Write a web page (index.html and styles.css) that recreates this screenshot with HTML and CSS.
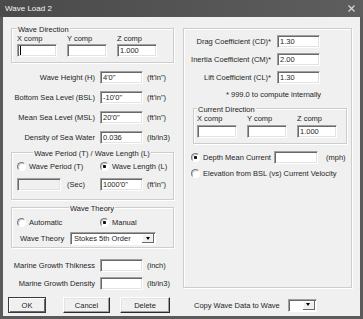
FILE: index.html
```html
<!DOCTYPE html>
<html lang="en">
<head>
    <meta charset="UTF-8">
    <title>Wave Load 2</title>
    <link rel="stylesheet" href="styles.css">
</head>
<body>

    <div class="window">
        <div class="title-bar">
            <span class="title">Wave Load 2</span>
            <svg class="close" width="7" height="7" viewBox="0 0 7 7">
                <path d="M0.5 0.5 L6.5 6.5 M6.5 0.5 L0.5 6.5" stroke="#dcdcdc" stroke-width="1.1" fill="none"/>
            </svg>
        </div>

        <div class="client">
            <div class="columns">

                <!-- Left column -->
                <div class="col-left">
                    <div class="group">
                        <span class="group-title">Wave Direction</span>
                        <div class="comp-grid">
                            <span>X comp</span><span>Y comp</span><span>Z comp</span>
                            <div class="edit-wrap"><input class="edit" type="text" value=""><span class="caret"></span></div>
                            <input class="edit" type="text" value="">
                            <input class="edit" type="text" value="1.000">
                        </div>
                    </div>

                    <div class="field-rows">
                        <label class="field-label">Wave Height (H)</label>
                        <input class="edit" type="text" value="4'0&quot;">
                        <span class="unit">(ft'in")</span>

                        <label class="field-label">Bottom Sea Level (BSL)</label>
                        <input class="edit" type="text" value="-10'0&quot;">
                        <span class="unit">(ft'in")</span>

                        <label class="field-label">Mean Sea Level (MSL)</label>
                        <input class="edit" type="text" value="20'0&quot;">
                        <span class="unit">(ft'in")</span>

                        <label class="field-label">Density of Sea Water</label>
                        <input class="edit" type="text" value="0.036">
                        <span class="unit">(lb/in3)</span>
                    </div>

                    <div class="group group-period">
                        <span class="group-title centered">Wave Period (T) / Wave Length (L)</span>
                        <div class="pair-grid">
                            <label class="radio"><input type="radio" name="period"> Wave Period (T)</label>
                            <label class="radio"><input type="radio" name="period" checked> Wave Length (L)</label>
                            <div class="cell">
                                <input class="edit edit-wide" type="text" value="" disabled>
                                <span class="unit-sec">(Sec)</span>
                            </div>
                            <div class="cell">
                                <input class="edit" type="text" value="1000'0&quot;">
                                <span class="unit">(ft'in")</span>
                            </div>
                        </div>
                    </div>

                    <div class="group group-theory">
                        <span class="group-title centered">Wave Theory</span>
                        <div class="pair-grid theory-radios">
                            <label class="radio"><input type="radio" name="theory"> Automatic</label>
                            <label class="radio"><input type="radio" name="theory" checked> Manual</label>
                        </div>
                        <div class="theory-row">
                            <span class="theory-label">Wave Theory</span>
                            <div class="combo combo-theory">
                                <span class="combo-text">Stokes 5th Order</span>
                                <span class="combo-btn"><i class="arrow"></i></span>
                            </div>
                        </div>
                    </div>

                    <div class="field-rows marine-rows">
                        <label class="field-label">Marine Growth Thikness</label>
                        <input class="edit" type="text" value="">
                        <span class="unit">(inch)</span>

                        <label class="field-label">Marine Growth Density</label>
                        <input class="edit" type="text" value="">
                        <span class="unit">(lb/in3)</span>
                    </div>
                </div>

                <!-- Right column -->
                <div class="panel">
                    <div class="coef-row">
                        <label>Drag Coefficient (CD)*</label>
                        <input class="edit" type="text" value="1.30">
                    </div>
                    <div class="coef-row">
                        <label>Inertia Coefficient (CM)*</label>
                        <input class="edit" type="text" value="2.00">
                    </div>
                    <div class="coef-row">
                        <label>Lift Coefficient (CL)*</label>
                        <input class="edit" type="text" value="1.30">
                    </div>
                    <p class="note">* 999.0 to compute internally</p>

                    <div class="group group-current">
                        <span class="group-title">Current Direction</span>
                        <div class="comp-grid">
                            <span>X comp</span><span>Y comp</span><span>Z comp</span>
                            <input class="edit" type="text" value="">
                            <input class="edit" type="text" value="">
                            <input class="edit" type="text" value="1.000">
                        </div>
                    </div>

                    <div class="current-row">
                        <label class="radio radio-fixed"><input type="radio" name="current" checked> Depth Mean Current</label>
                        <input class="edit edit-wide" type="text" value="">
                        <span class="unit-mph">(mph)</span>
                    </div>
                    <div class="current-row second">
                        <label class="radio"><input type="radio" name="current"> Elevation from BSL (vs) Current Velocity</label>
                    </div>
                </div>
            </div>

            <div class="bottom-bar">
                <button class="btn btn-default btn-ok">OK</button>
                <button class="btn btn-cancel">Cancel</button>
                <button class="btn btn-delete">Delete</button>
                <span class="copy-label">Copy Wave Data to Wave</span>
                <div class="combo combo-copy">
                    <span class="combo-text"></span>
                    <span class="combo-btn"><i class="arrow"></i></span>
                </div>
            </div>
        </div>
    </div>

</body>
</html>
```

FILE: styles.css
```css
/* --- Base --- */
:root {
    --face: #f0f0f0;
    --shadow: #a0a0a0;
    --dark: #696969;
    --frame: #5b5b5b;
    --etch: #cdcdcd;
    --text: #1e1e1e;
    --font-ui: "Liberation Sans", Arial, sans-serif;
}

* {
    margin: 0;
    padding: 0;
    box-sizing: border-box;
}

body {
    width: 363px;
    height: 319px;
    overflow: hidden;
    background: var(--frame);
    font-family: var(--font-ui);
    font-size: 7.5px;
    line-height: 9px;
    color: var(--text);
}

.window {
    width: 363px;
    height: 319px;
    display: flex;
    flex-direction: column;
}

/* --- Title bar --- */
.title-bar {
    height: 17px;
    flex-shrink: 0;
    display: flex;
    align-items: center;
    justify-content: space-between;
    padding: 0 8px 0 5px;
    background: linear-gradient(to right, #4a4a4a, #5e5e5e);
    color: #f4f4f4;
    font-size: 8px;
}

.close {
    display: block;
}

/* --- Client area --- */
.client {
    flex: 1;
    margin: 0 3px 3px;
    background: var(--face);
    padding: 11px 0 0 2px;
}

.columns {
    display: flex;
    margin-left: 6px;
    gap: 9px;
}

.col-left {
    width: 163px;
}

/* --- Group boxes --- */
.group {
    border: 1px solid var(--etch);
    box-shadow: inset 1px 1px 0 #fff, 1px 1px 0 #fff;
    padding: 0 0 5px 5px;
}

.group-title {
    display: block;
    width: max-content;
    margin-top: -4px;
    padding: 0 1px;
    background: var(--face);
}

.group-title.centered {
    margin-left: auto;
    margin-right: auto;
    position: relative;
    left: -3px;
}

.comp-grid {
    display: grid;
    grid-template-columns: 40px 40px 40px;
    column-gap: 10px;
    row-gap: 1px;
}

/* --- Edit boxes --- */
.edit {
    display: block;
    width: 43px;
    height: 13px;
    padding: 0 2px;
    font: inherit;
    color: var(--text);
    background: #fff;
    border: 1px solid;
    border-color: var(--shadow) #fff #fff var(--shadow);
    box-shadow: inset 1px 1px 0 var(--dark), inset -1px -1px 0 #e3e3e3;
    outline: none;
}

.comp-grid .edit {
    width: 40px;
}

.edit-wide {
    width: 44px;
}

.edit:disabled {
    background: var(--face);
}

.edit-wrap {
    position: relative;
}

.caret {
    position: absolute;
    left: 3px;
    top: 2px;
    width: 1px;
    height: 9px;
    background: #000;
}

/* --- Label / edit / unit rows --- */
.field-rows {
    display: grid;
    grid-template-columns: 89px 43px auto;
    row-gap: 7px;
    align-items: center;
    margin-top: 8px;
}

.field-label {
    text-align: right;
    padding-right: 5px;
    white-space: nowrap;
}

.unit {
    padding-left: 4px;
    white-space: nowrap;
}

.marine-rows {
    margin-top: 11px;
    row-gap: 5px;
}

/* --- Period / theory groups --- */
.group-period {
    margin-top: 8px;
    padding-bottom: 8px;
}

.group-theory {
    margin-top: 7px;
    padding-bottom: 2px;
}

.pair-grid {
    display: grid;
    grid-template-columns: 83px auto;
    row-gap: 6px;
    margin-top: 2px;
}

.theory-radios {
    margin-top: 3px;
}

.cell {
    display: flex;
    align-items: center;
}

.unit-sec {
    margin-left: 6px;
}

.theory-row {
    display: flex;
    align-items: center;
    margin-top: 4px;
}

.theory-label {
    width: 53px;
    padding-left: 3px;
}

/* --- Radio buttons --- */
.radio {
    display: flex;
    align-items: center;
    height: 12px;
    white-space: nowrap;
}

.radio input {
    appearance: none;
    -webkit-appearance: none;
    width: 9px;
    height: 9px;
    margin: 0 3px 0 0;
    border-radius: 50%;
    border: 1px solid;
    border-color: #7a7a7a #fff #fff #7a7a7a;
    background: #fff;
    box-shadow: inset 1px 1px 0 #c8c8c8;
    flex-shrink: 0;
}

.radio input:checked {
    background: radial-gradient(circle, #111 0 1.3px, #fff 1.9px);
}

/* --- Combo boxes --- */
.combo {
    display: flex;
    height: 13px;
    background: #fff;
    border: 1px solid;
    border-color: var(--shadow) #fff #fff var(--shadow);
    box-shadow: inset 1px 1px 0 var(--dark);
    padding: 1px;
}

.combo-theory {
    width: 86px;
}

.combo-copy {
    width: 29px;
    margin-left: 8px;
}

.combo-text {
    flex: 1;
    padding-left: 2px;
    line-height: 9px;
}

.combo-btn {
    width: 12px;
    display: flex;
    align-items: center;
    justify-content: center;
    background: var(--face);
    border-right: 1px solid var(--dark);
    border-bottom: 1px solid var(--dark);
    box-shadow: inset 1px 1px 0 #fff;
}

.arrow {
    width: 0;
    height: 0;
    border-left: 2.5px solid transparent;
    border-right: 2.5px solid transparent;
    border-top: 3px solid #000;
}

/* --- Right panel --- */
.panel {
    width: 169px;
    height: 260px;
    border: 1px solid var(--etch);
    box-shadow: inset 1px 1px 0 #fff, 1px 1px 0 #fff;
    padding: 6px 0 0 9px;
}

.coef-row {
    display: flex;
    justify-content: flex-end;
    align-items: center;
    margin-right: 31px;
    white-space: nowrap;
}

.coef-row + .coef-row {
    margin-top: 5px;
}

.coef-row label {
    margin-right: 6px;
}

.note {
    margin-top: 6px;
    padding-left: 33px;
}

.group-current {
    width: 154px;
    margin-top: 9px;
    padding-left: 3px;
}

.group-current .comp-grid {
    row-gap: 2px;
}

.current-row {
    display: flex;
    align-items: center;
    margin: 7px 0 0 -2px;
}

.current-row.second {
    margin-top: 3px;
}

.radio-fixed {
    width: 83px;
}

.unit-mph {
    margin-left: 8px;
}

/* --- Bottom bar --- */
.bottom-bar {
    display: flex;
    align-items: center;
    height: 16px;
    margin-top: 7px;
    margin-left: 3px;
}

.btn {
    height: 16px;
    font: inherit;
    color: var(--text);
    background: var(--face);
    border: 1px solid;
    border-color: #fff #2a2a2a #2a2a2a #fff;
    box-shadow: inset -1px -1px 0 var(--shadow), inset 1px 1px 0 #e3e3e3;
}

.btn-default {
    border-color: #3a3a3a;
    box-shadow: inset 1px 1px 0 #fff, inset -1px -1px 0 var(--dark);
}

.btn-ok {
    width: 38px;
}

.btn-cancel {
    width: 47px;
    margin-left: 17px;
}

.btn-delete {
    width: 50px;
    margin-left: 10px;
}

.copy-label {
    margin-left: 24px;
    white-space: nowrap;
}
```
